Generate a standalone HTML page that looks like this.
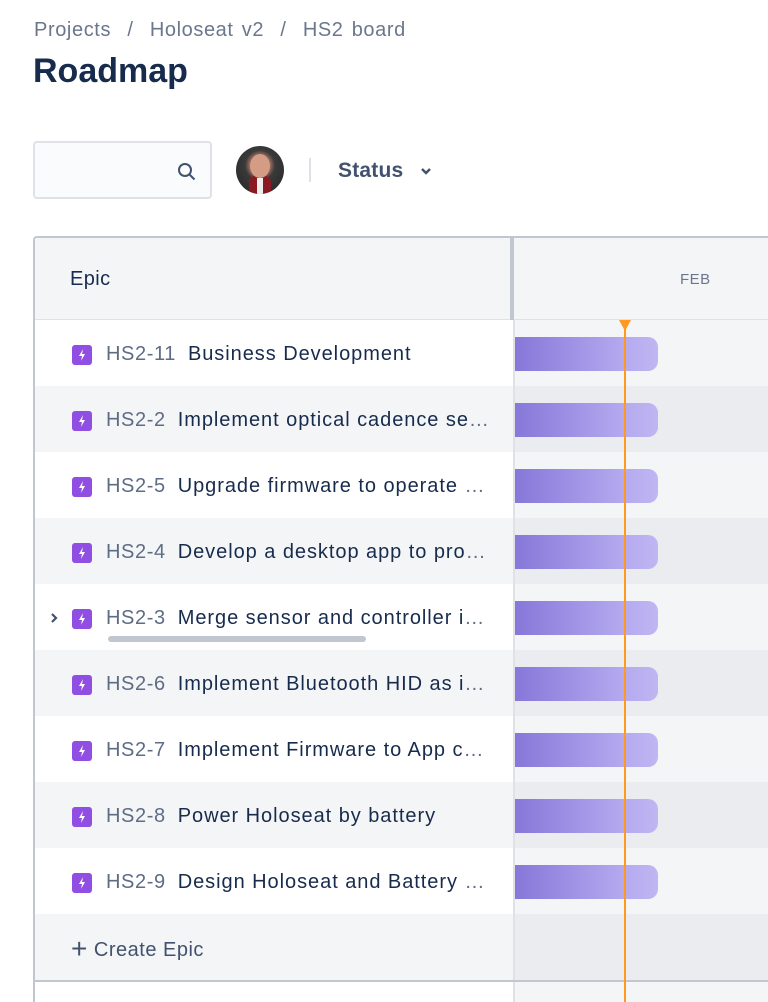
<!DOCTYPE html>
<html><head><style>
*{margin:0;padding:0;box-sizing:border-box}
html,body{width:768px;height:1002px;overflow:hidden}
body{background:#fff;font-family:"Liberation Sans",sans-serif;color:#172b4d;position:relative}
.bc{position:absolute;left:34px;top:19px;font-size:20px;color:#6b778c;letter-spacing:0.6px;word-spacing:2px}
h1{position:absolute;left:33px;top:52px;font-size:34px;font-weight:bold;color:#172b4d}
.search{position:absolute;left:33px;top:141px;width:179px;height:58px;border:2px solid #dfe1e6;border-radius:4px;background:#fafbfc}
.av{position:absolute;left:236px;top:146px;width:48px;height:48px;border-radius:50%;background:radial-gradient(circle at 50% 40%,#e0a890 0,#c08070 22%,#3a3a3a 40%,#222 100%);overflow:hidden}
.sep{position:absolute;left:309px;top:158px;width:2px;height:24px;background:#dfe1e6}
.status{position:absolute;left:338px;top:159px;font-size:21px;color:#42526e;font-weight:bold;letter-spacing:0.2px}
.tbl{position:absolute;left:33px;top:236px;width:735px;height:766px;border:2px solid #c1c7d0;border-right:none;border-bottom:none;border-radius:4px 0 0 0;overflow:hidden}
.hdr{position:absolute;left:0;top:0;width:100%;height:83px;background:#f4f5f7;border-bottom:2px solid #dfe1e6}
.row{position:absolute;left:0;width:100%;height:66px}
.lc{position:absolute;left:0;top:0;width:478px;height:100%}
.rc{position:absolute;left:480px;top:0;right:0;height:100%}
.ic{position:absolute;left:37px;top:25px;width:20px;height:20px;background:#904ee2;border-radius:3px}
.key{position:absolute;left:71px;top:23px;font-size:20px;color:#5e6c84;letter-spacing:0.6px;white-space:nowrap;width:387px;overflow:hidden;text-overflow:ellipsis}
.t{color:#172b4d;margin-left:12px;letter-spacing:0.95px}
.bar{position:absolute;left:0;top:17px;width:143px;height:34px;border-radius:0 10px 10px 0;background:linear-gradient(90deg,#8777d9,#b4a9ef 75%,#c0b6f2)}
</style></head><body>
<div class="bc">Projects &nbsp;/ &nbsp;Holoseat v2 &nbsp;/ &nbsp;HS2 board</div>
<h1>Roadmap</h1>
<div class="search"><svg style="position:absolute;left:142px;top:19px" width="20" height="20" viewBox="0 0 20 20"><circle cx="8" cy="8" r="6" fill="none" stroke="#42526e" stroke-width="2"/><path d="M12.5 12.5l5 5" stroke="#42526e" stroke-width="2"/></svg></div>
<div class="av"><div style="position:absolute;left:13px;top:30px;width:22px;height:20px;background:#8a1a22;border-radius:6px 6px 0 0"></div><div style="position:absolute;left:21px;top:32px;width:6px;height:16px;background:#eee"></div><div style="position:absolute;left:14px;top:8px;width:20px;height:24px;border-radius:50%;background:#d49c85"></div></div>
<div class="sep"></div>
<div class="status">Status <svg width="14" height="10" viewBox="0 0 14 10" style="margin-left:10px"><path d="M3 2l4 4 4-4" fill="none" stroke="#42526e" stroke-width="2.4"/></svg></div>
<div class="tbl">
<div class="hdr"><div style="position:absolute;left:35px;top:30px;font-size:20px;letter-spacing:0.4px">Epic</div><div style="position:absolute;left:645px;top:33px;font-size:15px;color:#6b778c;letter-spacing:0.5px">FEB</div><div style="position:absolute;left:475px;top:0;width:4px;height:83px;background:#c1c7d0"></div></div>
<div style="position:absolute;left:478px;top:82px;width:2px;height:682px;background:#dfe1e6"></div>
<div id="rows"></div>
</div>
<div style="position:absolute;left:624px;top:320px;width:2px;height:682px;background:#ff991f"></div>
<div style="position:absolute;left:619px;top:320px;width:0;height:0;border-left:6px solid transparent;border-right:6px solid transparent;border-top:11px solid #ff991f"></div>
<script>
var d=[["HS2-11","Business Development"],["HS2-2","Implement optical cadence sensor"],["HS2-5","Upgrade firmware to operate with"],["HS2-4","Develop a desktop app to provide"],["HS2-3","Merge sensor and controller into"],["HS2-6","Implement Bluetooth HID as input"],["HS2-7","Implement Firmware to App comms"],["HS2-8","Power Holoseat by battery"],["HS2-9","Design Holoseat and Battery case"]];
var h="";
d.forEach(function(r,i){var g=i%2;var top=82+i*66;
h+='<div class="row" style="top:'+top+'px"><div class="lc" style="background:'+(g?'#f4f5f7':'#fff')+'"><div class="ic"><svg width="20" height="20" viewBox="0 0 20 20"><path d="M11 4L7 11h3l-1 5 4-7h-3z" fill="#fff"/></svg></div><div class="key">'+r[0]+'<span class="t">'+r[1]+'</span></div>'+(i==4?'<svg style="position:absolute;left:14px;top:28px" width="10" height="12" viewBox="0 0 10 12"><path d="M3 2l4 4-4 4" fill="none" stroke="#42526e" stroke-width="2.2"/></svg><div style="position:absolute;left:73px;top:52px;width:258px;height:6px;border-radius:3px;background:#c1c7d0"></div>':'')+'</div><div class="rc" style="background:'+(g?'#ebecf0':'#f4f5f7')+'"><div class="bar"></div></div></div>';});
h+='<div class="row" style="top:676px;border-bottom:2px solid #c1c7d0;height:68px"><div class="lc" style="background:#f4f5f7"><div style="position:absolute;left:36px;top:19px;font-size:20px;color:#42526e;letter-spacing:0.5px"><span style="font-size:28px;font-weight:300;vertical-align:-2px">+</span> Create Epic</div></div><div class="rc" style="background:#ebecf0"></div></div>';
h+='<div class="row" style="top:744px;height:20px"><div class="rc" style="background:#f4f5f7"></div></div>';
document.getElementById("rows").innerHTML=h;
</script>
</body></html>
